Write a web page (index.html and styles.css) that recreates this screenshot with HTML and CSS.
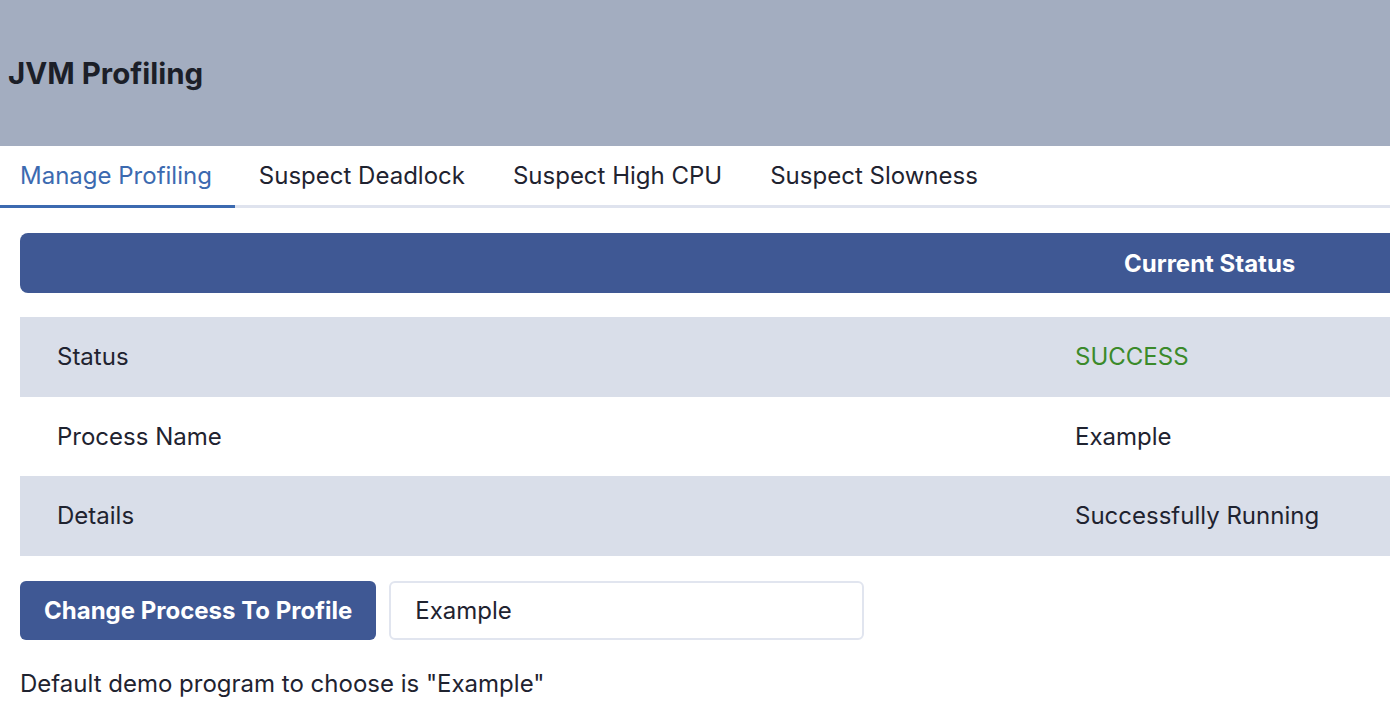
FILE: index.html
```html
<!DOCTYPE html>
<html>
<head>
<meta charset="utf-8">
<link rel="stylesheet" href="styles.css">
</head>
<body>
<header class="topbar">
  <h1 class="title">JVM Profiling</h1>
</header>
<nav class="tabs">
  <div class="tab active">Manage Profiling</div>
  <div class="tab">Suspect Deadlock</div>
  <div class="tab">Suspect High CPU</div>
  <div class="tab">Suspect Slowness</div>
</nav>
<main class="content">
  <div class="table">
    <div class="thead">
      <div class="th"></div>
      <div class="th th-status">Current Status</div>
    </div>
    <div class="row alt">
      <div class="cell">Status</div>
      <div class="cell success">SUCCESS</div>
    </div>
    <div class="row">
      <div class="cell">Process Name</div>
      <div class="cell">Example</div>
    </div>
    <div class="row alt">
      <div class="cell">Details</div>
      <div class="cell">Successfully Running</div>
    </div>
  </div>
  <div class="actions">
    <button class="btn">Change Process To Profile</button>
    <input class="input" type="text" value="Example">
  </div>
  <p class="hint">Default demo program to choose is "Example"</p>
</main>
</body>
</html>
```

FILE: styles.css
```css
html, body {
  margin: 0;
  padding: 0;
  overflow: hidden;
}
body {
  font-family: Inter, "Noto Sans", sans-serif;
  color: #1f2330;
  background: #ffffff;
  width: 1390px;
}
.topbar {
  background: #a3adc0;
  height: 146px;
  display: flex;
  align-items: center;
  padding: 0 8px;
  box-sizing: border-box;
}
.title {
  margin: 0;
  font-size: 29.5px;
  font-weight: 700;
  color: #1c1f28;
}
.tabs {
  display: flex;
  height: 62px;
  border-bottom: 3px solid #dfe3ee;
  box-sizing: border-box;
}
.tab {
  display: flex;
  align-items: center;
  padding: 0 24px;
  font-size: 24px;
  color: #1f2330;
  margin-bottom: -3px;
  border-bottom: 3px solid transparent;
}
.tab:first-child {
  padding-left: 20px;
  padding-right: 23px;
}
.tab.active {
  color: #3c6ab0;
  border-bottom-color: #3c6ab0;
}
.content {
  padding: 25px 0 0 20px;
}
.table {
  width: 1400px;
  display: flex;
  flex-direction: column;
}
.thead {
  display: grid;
  grid-template-columns: 1018px 1fr;
  height: 60px;
  align-items: center;
  background: #3f5894;
  border-radius: 8px 0 0 8px;
  color: #ffffff;
  font-weight: 700;
  font-size: 24px;
  margin-bottom: 24px;
}
.th-status {
  padding-left: 86px;
}
.row {
  display: grid;
  grid-template-columns: 1018px 1fr;
  height: 79.5px;
  align-items: center;
  font-size: 24px;
}
.row.alt {
  background: #d9dee9;
}
.cell {
  padding-left: 37px;
}
.success {
  color: #3b8a2a;
}
.actions {
  display: flex;
  gap: 13px;
  margin-top: 25px;
}
.btn {
  font-family: inherit;
  font-size: 24px;
  font-weight: 700;
  color: #ffffff;
  background: #3f5894;
  border: none;
  border-radius: 6px;
  height: 59px;
  padding: 0 24px;
}
.input {
  font-family: inherit;
  font-size: 24px;
  color: #1f2330;
  width: 475px;
  height: 59px;
  box-sizing: border-box;
  border: 2px solid #e1e5ef;
  border-radius: 6px;
  padding: 0 24px;
  outline: none;
}
.hint {
  margin: 29px 0 0;
  font-size: 24px;
  color: #1f2330;
}
```
